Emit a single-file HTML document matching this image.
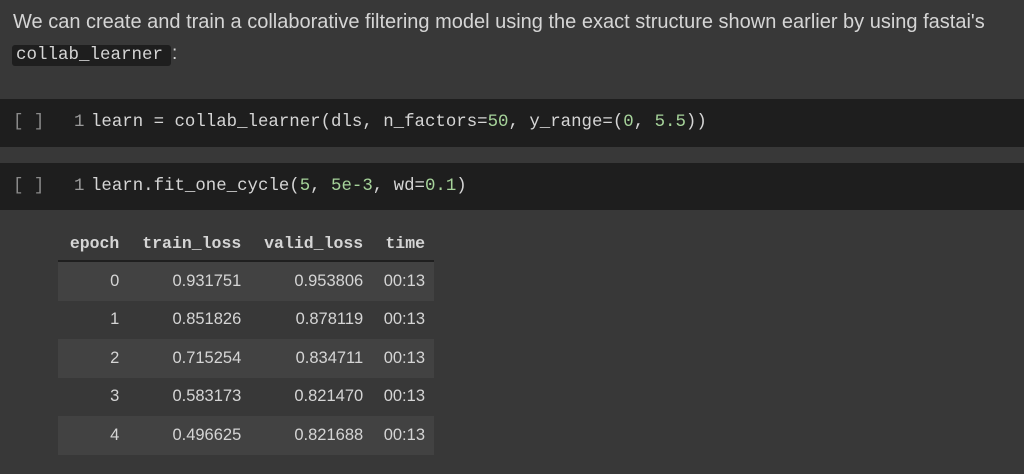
<!DOCTYPE html>
<html><head><style>
body{margin:0;width:1024px;height:474px;background:#383838;overflow:hidden;font-family:"Liberation Sans",sans-serif;color:#d5d5d5;position:relative}
.p{position:absolute;left:13px;top:9px;font-size:20px;line-height:26px;letter-spacing:0px;white-space:nowrap}
.ic{position:absolute;left:12px;top:45px;height:21px;width:159px;background:#1e1e1e;border-radius:3px;font-family:"Liberation Mono",monospace;font-size:17.5px;line-height:21px;padding-left:4px;box-sizing:border-box;white-space:nowrap}
.colon{position:absolute;left:172px;top:43px;font-size:19px}
.cell{position:absolute;left:0;width:1024px;background:#1e1e1e;font-family:"Liberation Mono",monospace;font-size:17.4px;color:#d5d5d5;white-space:nowrap}
.br{position:absolute;left:13px;color:#8a8a8a}
.ln{position:absolute;left:74px;color:#9a9a9a}
.code{position:absolute;left:91px}
.g{color:#a6d39a}
table{position:absolute;left:58px;top:227px;border-collapse:collapse;width:376px;font-size:16.5px}
th{font-family:"Liberation Mono",monospace;font-weight:bold;font-size:16.5px;color:#d5d5d5;text-align:right;height:33px;padding:0 9px;border-bottom:2px solid #1f1f1f;white-space:nowrap}
td{text-align:right;height:38.5px;padding:0 9px;color:#d5d5d5}
tr:nth-child(odd) td{background:#424242}
</style></head><body>
<div class="p">We can create and train a collaborative filtering model using the exact structure shown earlier by using fastai's</div>
<div class="ic">collab_learner</div><div class="colon">:</div>
<div class="cell" style="top:99px;height:48px;line-height:48px"><span class="br">[ ]</span><span class="ln">1</span><span class="code">learn = collab_learner(dls, n_factors=<span class="g">50</span>, y_range=(<span class="g">0</span>, <span class="g">5.5</span>))</span></div>
<div class="cell" style="top:163px;height:47px;line-height:47px"><span class="br">[ ]</span><span class="ln">1</span><span class="code">learn.fit_one_cycle(<span class="g">5</span>, <span class="g">5e-3</span>, wd=<span class="g">0.1</span>)</span></div>
<table>
<thead><tr><th>epoch</th><th>train_loss</th><th>valid_loss</th><th>time</th></tr></thead>
<tbody>
<tr><td>0</td><td>0.931751</td><td>0.953806</td><td>00:13</td></tr>
<tr><td>1</td><td>0.851826</td><td>0.878119</td><td>00:13</td></tr>
<tr><td>2</td><td>0.715254</td><td>0.834711</td><td>00:13</td></tr>
<tr><td>3</td><td>0.583173</td><td>0.821470</td><td>00:13</td></tr>
<tr><td>4</td><td>0.496625</td><td>0.821688</td><td>00:13</td></tr>
</tbody></table>
</body></html>
